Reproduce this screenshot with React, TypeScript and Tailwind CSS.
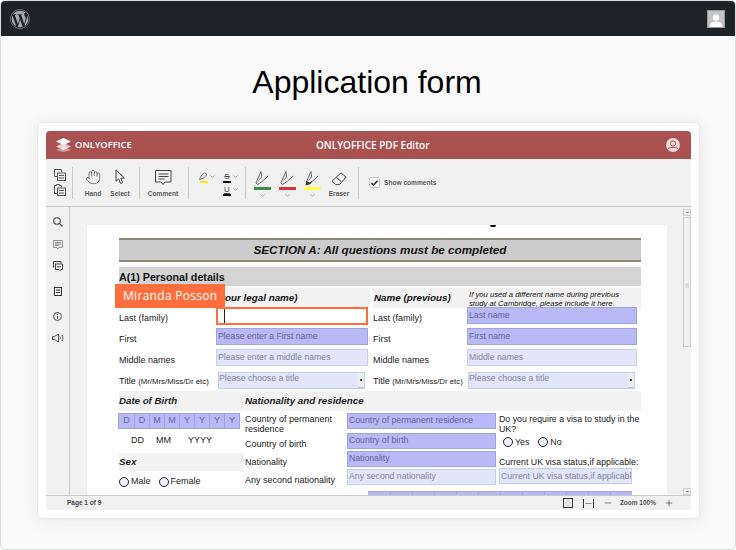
import { Hand, ChevronDown, Plus, Minus } from "lucide-react";
import { FaWordpress } from "react-icons/fa";

const sans = "font-['Liberation_Sans',Arial,sans-serif]";

function Copy() {
  return (
    <svg width="12" height="12" viewBox="0 0 12 12" fill="none" stroke="#555" strokeWidth="1">
      <path d="M7.5 3V.5h-7v7H3" />
      <rect x="3.5" y="4" width="8" height="7.5" />
      <path d="M5 6.5h5M5 9h5" />
    </svg>
  );
}
function Paste() {
  return (
    <svg width="12" height="12" viewBox="0 0 12 12" fill="none" stroke="#555" strokeWidth="1">
      <path d="M7.5 3V1.5h-2V.5h-3v1h-2v8H3" />
      <rect x="3.5" y="4" width="8" height="7.5" />
      <path d="M5 6.5h5M5 9h5" />
    </svg>
  );
}
function Arrow() {
  return (
    <svg width="11" height="16" viewBox="0 0 11 16" fill="none" stroke="#444" strokeWidth="1">
      <path d="M1 .8v11.5l2.7-2.4 1.9 4.6 2.1-.9-1.9-4.5h3.6z" strokeLinejoin="round" />
    </svg>
  );
}
function CommentIcon({ w = 17, h = 16 }: { w?: number; h?: number }) {
  return (
    <svg width={w} height={h} viewBox="0 0 17 16" fill="none" stroke="#444" strokeWidth="1">
      <path d="M.5.5h15.5v11.5H10l-2 2.5-2-2.5H.5z" />
      <path d="M3.5 4h10M3.5 6.5h10M3.5 9h6" />
    </svg>
  );
}
function Pen({ fill = false }: { fill?: boolean }) {
  return (
    <svg width="15" height="15" viewBox="0 0 15 15" fill="none" stroke="#666" strokeWidth="1">
      <path d="M6 .5 3.2 6.800 1 12l1.600 1.600 4.600-3.200 6-5.400" />
      <path d="M6 .8 6.600 6 3.400 9.400" />
      {fill ? <path d="M.5 14.500 1.500 10l3 1.600 3-1.600-2 3z" fill="#333" stroke="none" /> : null}
    </svg>
  );
}
function Eraser() {
  return (
    <svg width="16" height="14" viewBox="0 0 16 14" fill="none" stroke="#444" strokeWidth="1">
      <path d="M10 .8 15 5.200 8.500 12.600H4.600L1 9.300z" strokeLinejoin="round" />
      <path d="M5.300 5.200 10.400 9.800" />
    </svg>
  );
}
function Chev({ className = "" }: { className?: string }) {
  return <ChevronDown size={7} strokeWidth={1.5} className={`text-[#555] ${className}`} />;
}
function Sep() {
  return <div className="w-px h-[32px] bg-[#c9c9c9] shrink-0" />;
}
function Tool({ label, w, pad, children }: { label: string; w: string; pad: string; children: React.ReactNode }) {
  return (
    <div className={`flex flex-col items-center ${w}`}>
      <div className={`h-[20px] flex items-start justify-center ${pad}`}>{children}</div>
      <span className="mt-[1px] text-[6.6px] leading-[9px] font-bold text-[#5a5a5a] whitespace-nowrap">{label}</span>
    </div>
  );
}
function PenTool({ color, fill }: { color: string; fill?: boolean }) {
  return (
    <div className="flex flex-col items-center w-[17px]">
      <Pen fill={fill} />
      <div className={`w-[17px] h-[3px] mt-[1px] ${color}`} />
      <Chev className="mt-[2px]" />
    </div>
  );
}
function Rail({ children, mt }: { children: React.ReactNode; mt: string }) {
  return <div className={`flex justify-center ${mt}`}>{children}</div>;
}
function Radio({ label }: { label: string }) {
  return (
    <span className="flex items-center gap-[2px]">
      <span className="w-[10px] h-[10px] rounded-full border-[1.5px] border-[#1b1b2f] bg-[#eef0fc]" />
      <span>{label}</span>
    </span>
  );
}
function Field({ text, on, className = "" }: { text: string; on?: boolean; className?: string }) {
  return (
    <div
      className={`flex items-center pl-[1px] text-[8.7px] overflow-hidden whitespace-nowrap border ${
        on ? "bg-[#b9b9f6] border-[#9ea6e2] text-[#6262a0]" : "bg-[#e2e6fb] border-[#c0cfec] text-[#82849e]"
      } ${className}`}
    >
      {text}
    </div>
  );
}
function Select({ text, className = "" }: { text: string; className?: string }) {
  return (
    <div className={`relative h-[17px] bg-[#e2e6fb] border border-[#c0cfec] text-[8.7px] leading-[10px] text-[#82849e] ${className}`}>
      {text}
      <div className="absolute right-0 top-0 bottom-0 w-[6px] bg-[#eeeeee] border-b border-[#bbb] flex items-center justify-center">
        <div className="w-[2px] h-[2px] bg-[#444]" />
      </div>
    </div>
  );
}
function Label({ children, className = "" }: { children: React.ReactNode; className?: string }) {
  return <div className={`text-[9px] leading-[10px] text-[#222] ${className}`}>{children}</div>;
}

export default function App() {
  return (
    <div className={`w-[736px] h-[550px] bg-[#fafafa] border border-[#dcdcdc] rounded-[5px] overflow-hidden flex flex-col ${sans}`}>
      <header className="h-[35px] shrink-0 bg-[#1d2327] flex items-center justify-between pl-[9px] pr-[10px]">
        <FaWordpress size={20} className="text-[#a7aaad]" />
        <div className="w-[18px] h-[18px] bg-[#c4c4c4] border border-[#9a9a9a] flex items-end justify-center overflow-hidden">
          <svg width="14" height="14" viewBox="0 0 14 14" fill="#fff">
            <circle cx="7" cy="4.500" r="3.200" />
            <path d="M1 14c0-4 2.500-5.500 6-5.500s6 1.500 6 5.500z" />
          </svg>
        </div>
      </header>

      <h1 className="mt-[26px] h-[40px] pr-[2px] text-center text-[32px] leading-[40px] text-black">Application form</h1>

      <main className="mt-[20px] ml-[36px] w-[663px] h-[397px] bg-white border border-[#e6e6e6] rounded-[5px] shadow-[0_2px_18px_rgba(0,0,0,0.08)] p-[8px]">
        <div className="w-[645px] h-[379px] flex flex-col rounded-t-[4px] overflow-hidden bg-[#f1f1f1]">
          {/* Title bar */}
          <div className="relative h-[28px] shrink-0 bg-[#aa5252] flex items-center justify-between pl-[10px] pr-[11px] text-white font-['Open_Sans',sans-serif]">
            <div className="flex items-center gap-[4px]">
              <svg width="15" height="15" viewBox="0 0 15 15">
                <path d="M7.500 9.500 0 13l7.500 2L15 13z" fill="#fff" opacity=".45" transform="translate(0 -1)" />
                <path d="M7.500 5 0 8.500l7.500 3.500L15 8.500z" fill="#fff" opacity=".75" />
                <path d="M7.500 0 0 3.500 7.500 7 15 3.500z" fill="#fff" />
              </svg>
              <span className="text-[9.4px] font-semibold">ONLYOFFICE</span>
            </div>
            <span className="absolute left-[270px] w-[113px] text-center text-[10px] font-semibold whitespace-nowrap">ONLYOFFICE PDF Editor</span>
            <svg width="14" height="14" viewBox="0 0 14 14">
              <circle cx="7" cy="7" r="7" fill="#f3dcdc" />
              <circle cx="7" cy="5.500" r="2.600" fill="none" stroke="#aa5252" strokeWidth="1" />
              <path d="M2 10.500c2-1.500 8-1.500 10 0" fill="none" stroke="#aa5252" strokeWidth="1" />
            </svg>
          </div>

          {/* Toolbar */}
          <div className="h-[48px] shrink-0 border-b border-[#c9c9c9] flex items-center pl-[8px] bg-[#f1f1f1]">
            <div className="flex flex-col gap-[3px] w-[12px] mr-[6px]">
              <Copy />
              <Paste />
            </div>
            <Sep />
            <Tool label="Hand" w="w-[26px] ml-[7px]" pad="pt-[1px]">
              <Hand size={16} strokeWidth={1} className="text-[#444]" />
            </Tool>
            <Tool label="Select" w="w-[22px] ml-[3px]" pad="pt-[1px]">
              <Arrow />
            </Tool>
            <div className="w-[8px]" />
            <Sep />
            <Tool label="Comment" w="w-[36px] ml-[5px]" pad="pt-[2px]">
              <CommentIcon />
            </Tool>
            <div className="w-[7px]" />
            <Sep />
            <div className="ml-[10px] flex items-start h-[32px] pt-[5px] w-[18px]">
              <div className="flex flex-col items-center w-[9px]">
                <svg width="9" height="8" viewBox="0 0 9 8" fill="none" stroke="#777">
                  <path d="M.7 7.500 1.500 4.500 5.500.7 8 2.700 4 6.500z" />
                </svg>
                <div className="w-[8px] h-[2px] bg-[#ffe600] mt-[1px]" />
              </div>
              <Chev className="ml-[1px] mt-[1px]" />
            </div>
            <div className="ml-[6px] h-[32px] pt-[5px] flex flex-col gap-[2px] w-[16px]">
              <div className="flex items-start">
                <div className="w-[8px] flex flex-col items-center">
                  <span className="text-[8px] leading-[9px] line-through text-[#444]">S</span>
                  <div className="w-[8px] h-[2px] bg-black" />
                </div>
                <Chev className="ml-[1px] mt-[1px]" />
              </div>
              <div className="flex items-start">
                <div className="w-[8px] flex flex-col items-center">
                  <span className="text-[8px] leading-[9px] underline text-[#444]">U</span>
                  <div className="w-[8px] h-[2px] bg-black" />
                </div>
                <Chev className="ml-[1px] mt-[1px]" />
              </div>
            </div>
            <div className="w-[6px]" />
            <Sep />
            <div className="ml-[8px] mt-[5px] flex gap-[8px] items-start">
              <PenTool color="bg-[#3f8a45]" />
              <PenTool color="bg-[#dc3232]" />
              <PenTool color="bg-[#ffff3c]" fill />
            </div>
            <Tool label="Eraser" w="w-[22px] ml-[7px]" pad="pt-[4px]">
              <Eraser />
            </Tool>
            <div className="w-[8px]" />
            <Sep />
            <div className="ml-[10px] w-[11px] h-[11px] rounded-[2px] bg-white border border-[#c4c4c4] flex items-center justify-center">
              <svg width="7" height="6" viewBox="0 0 7 6" fill="none" stroke="#333" strokeWidth="1.600">
                <path d="M.5 3 2.500 5 6.500.8" />
              </svg>
            </div>
            <span className="ml-[4px] text-[6.6px] font-bold text-[#5a5a5a] whitespace-nowrap">Show comments</span>
          </div>

          {/* Body */}
          <div className="h-[288px] shrink-0 flex">
            <aside className="w-[24px] shrink-0 border-r border-[#c9c9c9] flex flex-col text-[#444]">
              <Rail mt="mt-[10px]">
                <svg width="10" height="10" viewBox="0 0 10 10" fill="none" stroke="#444" strokeWidth="1.100">
                  <circle cx="4" cy="4" r="3.300" />
                  <path d="M6.500 6.500 9.500 9.500" />
                </svg>
              </Rail>
              <Rail mt="mt-[13px]"><CommentIcon w={10} h={10} /></Rail>
              <Rail mt="mt-[11px]">
                <svg width="10" height="11" viewBox="0 0 10 11" fill="none" stroke="#444">
                  <path d="M.5 6.500V.5h7.500V2.500" />
                  <path d="M2.500 3h7v5.500H8l-1 1.200-1-1.200H2.500z" />
                  <path d="M4 5.700h4" />
                </svg>
              </Rail>
              <Rail mt="mt-[15px]">
                <svg width="8" height="9" viewBox="0 0 8 9" fill="none" stroke="#333">
                  <rect x=".5" y=".5" width="7" height="8" />
                  <path d="M2 3h4M2 5.500h4" />
                </svg>
              </Rail>
              <Rail mt="mt-[16px]">
                <svg width="9" height="9" viewBox="0 0 9 9" fill="none" stroke="#444" strokeWidth=".9">
                  <circle cx="4.500" cy="4.500" r="4" />
                  <path d="M4.500 4v3M4.500 2v1" />
                </svg>
              </Rail>
              <Rail mt="mt-[12px]">
                <svg width="12" height="10" viewBox="0 0 12 10" fill="none" stroke="#444" strokeWidth=".9">
                  <path d="M.5 3.500v3h2l4 2.500V1L2.500 3.500z" />
                  <path d="M8 3.500c.8 1 .8 2 0 3M10 2c1.300 2 1.300 4 0 6" />
                </svg>
              </Rail>
            </aside>

            <div className="flex-1 flex pl-[17px] pt-[18px]">
              {/* PDF page */}
              <div className="relative w-[580px] h-[270px] bg-white overflow-hidden pl-[32px] pt-[13px]">
                <div className="absolute left-[403px] top-0 w-[6px] h-[2px] rounded-b-full bg-black" />
                <div className="w-[522px]">
                  <div className="h-[24px] bg-[#cccccc] border-y-2 border-[#8b8676] flex items-center justify-center text-[11.7px] font-bold italic text-[#111]">
                    SECTION A: All questions must be completed
                  </div>
                  <div className="mt-[5px] h-[19px] pt-[1px] bg-[#d4d4d4] flex items-center text-[10.7px] font-bold text-[#111]">
                    A(1) Personal details
                  </div>

                  <div className="mt-[2px] grid grid-cols-[254px_268px]">
                    <div className="h-[20px] mr-[3px] bg-[#f2f2f2] flex items-center pl-[68px] text-[9.8px] font-bold italic text-[#111] whitespace-nowrap">
                      Name (your legal name)
                    </div>
                    <div className="h-[20px] bg-[#f2f2f2] flex items-center pl-[1px]">
                      <span className="w-[95px] text-[9.8px] font-bold italic text-[#111]">Name (previous)</span>
                      <span className="pt-[1px] text-[7.7px] leading-[9px] italic text-[#111] whitespace-nowrap">
                        If you used a different name during previous
                        <br />
                        study at Cambridge, please include it here.
                      </span>
                    </div>
                  </div>

                  <div className="-mt-[1px] grid grid-cols-[97px_157px_94px_174px] grid-rows-[21px_21px_23px_19px] items-start">
                    <Label className="pt-[6px]">Last (family)</Label>
                    <div className="relative w-[152px] h-[18px] border-2 border-[#ff6f3d] bg-white">
                      <div className="absolute left-[6px] top-0 w-px h-[14px] bg-[#222]" />
                    </div>
                    <Label className="pt-[6px]">Last (family)</Label>
                    <Field text="Last name" on className="w-[170px] h-[17px]" />

                    <Label className="pt-[6px]">First</Label>
                    <Field text="Please enter a First name" on className="w-[152px] h-[17px]" />
                    <Label className="pt-[6px]">First</Label>
                    <Field text="First name" on className="w-[170px] h-[17px]" />

                    <Label className="pt-[6px]">Middle names</Label>
                    <Field text="Please enter a middle names" className="w-[152px] h-[17px]" />
                    <Label className="pt-[6px]">Middle names</Label>
                    <Field text="Middle names" className="w-[170px] h-[17px]" />

                    <Label className="pt-[4px] whitespace-nowrap">
                      Title <span className="text-[7.8px]">(Mr/Mrs/Miss/Dr etc)</span>
                    </Label>
                    <Select text="Please choose a title" className="ml-[2px] w-[147px]" />
                    <Label className="pt-[4px] whitespace-nowrap">
                      Title <span className="text-[7.8px]">(Mr/Mrs/Miss/Dr etc)</span>
                    </Label>
                    <Select text="Please choose a title" className="ml-[1px] w-[167px]" />
                  </div>

                  <div className="grid grid-cols-[126px_396px]">
                    <div>
                      <div className="h-[20px] w-[125px] bg-[#f2f2f2] flex items-center text-[9.7px] font-bold italic text-[#222]">
                        Date of Birth
                      </div>
                      <div className="mt-[2px] -ml-[1px] w-[122px] h-[16px] grid grid-cols-8 bg-[#b9b9f6] border border-[#9ea6e2]">
                        {["D", "D", "M", "M", "Y", "Y", "Y", "Y"].map((c, i) => (
                          <span key={i} className="flex items-center justify-center text-[9px] text-[#6262a0] border-l border-[#9ea6e2] first:border-l-0">
                            {c}
                          </span>
                        ))}
                      </div>
                      <div className="h-[24px] flex items-center text-[9px] text-[#222]">
                        <span className="ml-[12px] w-[25px]">DD</span>
                        <span className="w-[32px]">MM</span>
                        <span>YYYY</span>
                      </div>
                      <div className="h-[18px] w-[125px] bg-[#f2f2f2] flex items-center text-[9.8px] font-bold italic text-[#222]">Sex</div>
                      <div className="mt-[4px] flex gap-[8px] text-[9px] text-[#222]">
                        <Radio label="Male" />
                        <Radio label="Female" />
                      </div>
                    </div>
                    <div>
                      <div className="h-[20px] bg-[#f2f2f2] flex items-center text-[9.8px] font-bold italic text-[#222]">
                        Nationality and residence
                      </div>
                      <div className="mt-[2px] grid grid-cols-[102px_152px_142px] grid-rows-[20px_18px_18px_18px]">
                        <Label className="pt-[1px]">
                          Country of permanent
                          <br />
                          residence
                        </Label>
                        <Field text="Country of permanent residence" on className="w-[149px] h-[16px]" />
                        <div className="row-span-4 text-[8.8px] leading-[10px] text-[#222]">
                          <div className="pt-[1px] whitespace-nowrap">
                            Do you require a visa to study in the
                            <br />
                            UK?
                          </div>
                          <div className="mt-[3px] ml-[4px] flex gap-[9px]">
                            <Radio label="Yes" />
                            <Radio label="No" />
                          </div>
                          <div className="mt-[10px] whitespace-nowrap">Current UK visa status,if applicable:</div>
                          <Field text="Current UK visa status,if applicable" className="mt-[1px] w-[133px] h-[16px]" />
                        </div>
                        <Label className="pt-[6px]">Country of birth</Label>
                        <Field text="Country of birth" on className="w-[149px] h-[16px]" />
                        <Label className="pt-[6px]">Nationality</Label>
                        <Field text="Nationality" on className="w-[149px] h-[16px]" />
                        <Label className="pt-[6px]">Any second nationality</Label>
                        <Field text="Any second nationality" className="w-[149px] h-[16px]" />
                      </div>
                      <div className="mt-[4px] ml-[123px] w-[264px] h-[8px] grid grid-cols-12 bg-[#b9b9f6] border-t border-[#9ea6e2]">
                        {Array.from({ length: 12 }).map((_, i) => (
                          <span key={i} className="border-l border-[#9ea6e2] first:border-l-0" />
                        ))}
                      </div>
                    </div>
                  </div>
                </div>

                <div className="absolute left-[28px] top-[59px] w-[110px] h-[24px] bg-[#ff6f3d] flex items-center pl-[8px] text-white text-[12px] tracking-[0.3px] font-['Open_Sans',sans-serif]">
                  Miranda Posson
                </div>
              </div>

              {/* Scrollbar */}
              <div className="ml-[16px] -mt-[16px] w-[8px] h-[286px] flex flex-col">
                <div className="h-[7px] border border-[#cfcfcf] flex items-center justify-center">
                  <div className="w-[3px] h-px bg-[#999]" />
                </div>
                <div className="relative mt-[1px] h-[130px] border border-[#cfcfcf] bg-[#f1f1f1]">
                  <div className="absolute left-[1px] right-[1px] top-[65px] h-[5px] bg-[#ddd]" />
                </div>
                <div className="mt-auto h-[7px] border border-[#cfcfcf] flex items-center justify-center">
                  <div className="w-[3px] h-px bg-[#999]" />
                </div>
              </div>
            </div>
          </div>

          {/* Status bar */}
          <div className="flex-1 border-t border-[#c9c9c9] flex items-center pl-[21px] text-[6.5px] font-bold text-[#444]">
            <span>Page 1 of 9</span>
            <div className="ml-auto mr-[17px] flex items-center">
              <svg width="10" height="10" viewBox="0 0 10 10" fill="none" stroke="#333">
                <rect x=".5" y=".5" width="9" height="9" />
                <path d="M5 2.500v1M5 6.500v1M2.500 5h1M6.500 5h1" stroke="#777" />
              </svg>
              <svg className="ml-[10px]" width="11" height="9" viewBox="0 0 11 9" fill="none" stroke="#333">
                <path d="M.5 0v9M10.500 0v9" />
                <path d="M2.500 4.500h6" stroke="#888" />
              </svg>
              <Minus size={10} strokeWidth={1.3} className="ml-[9px] text-[#222]" />
              <span className="ml-[7px] whitespace-nowrap text-[#555]">Zoom 100%</span>
              <Plus size={10} strokeWidth={1.3} className="ml-[8px] text-[#222]" />
            </div>
          </div>
        </div>
      </main>
    </div>
  );
}
